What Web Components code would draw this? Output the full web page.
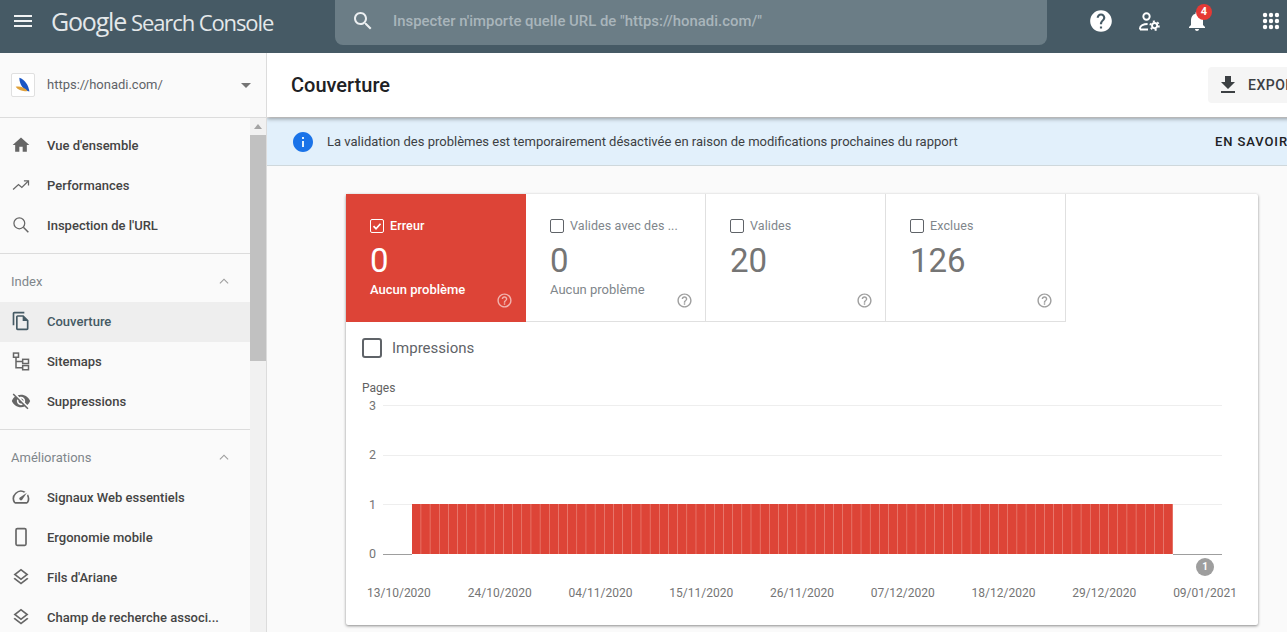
<!DOCTYPE html>
<html lang="fr">
<head>
<meta charset="utf-8">
<title>Couverture</title>
<style>
  html, body { margin: 0; height: 632px; overflow: hidden; background: #fafafa; font-family: Roboto, "Liberation Sans", sans-serif; }
  #app { display: flex; flex-direction: column; height: 632px; }
  #body { display: flex; flex: 1; min-height: 0; }
</style>
</head>
<body>
<div id="app">
  <gsc-header></gsc-header>
  <div id="body">
    <gsc-sidebar>
      <gsc-nav-item icon="home">Vue d'ensemble</gsc-nav-item>
      <gsc-nav-item icon="trending">Performances</gsc-nav-item>
      <gsc-nav-item icon="lens">Inspection de l'URL</gsc-nav-item>
      <gsc-nav-heading>Index</gsc-nav-heading>
      <gsc-nav-item icon="copy" active>Couverture</gsc-nav-item>
      <gsc-nav-item icon="sitemap">Sitemaps</gsc-nav-item>
      <gsc-nav-item icon="eyeoff">Suppressions</gsc-nav-item>
      <gsc-nav-heading>Améliorations</gsc-nav-heading>
      <gsc-nav-item icon="speed">Signaux Web essentiels</gsc-nav-item>
      <gsc-nav-item icon="phone">Ergonomie mobile</gsc-nav-item>
      <gsc-nav-item icon="layers">Fils d'Ariane</gsc-nav-item>
      <gsc-nav-item icon="layers">Champ de recherche associ...</gsc-nav-item>
    </gsc-sidebar>
    <gsc-main>
      <gsc-card>
        <gsc-tile slot="tiles" label="Erreur" value="0" sub="Aucun problème" selected></gsc-tile>
        <gsc-tile slot="tiles" label="Valides avec des ..." value="0" sub="Aucun problème"></gsc-tile>
        <gsc-tile slot="tiles" label="Valides" value="20"></gsc-tile>
        <gsc-tile slot="tiles" label="Exclues" value="126"></gsc-tile>
        <gsc-chart></gsc-chart>
      </gsc-card>
    </gsc-main>
  </div>
</div>

<script>
// material-ish glyphs, all on a 24 box
const ICONS = {
    menu: '<path d="M3 18h18v-2H3v2zm0-5h18v-2H3v2zm0-7v2h18V6H3z"/>',
    search: '<path d="M15.5 14h-.79l-.28-.27C15.41 12.59 16 11.11 16 9.5 16 5.91 13.09 3 9.5 3S3 5.91 3 9.5 5.91 16 9.5 16c1.61 0 3.09-.59 4.23-1.57l.27.28v.79l5 4.99L20.49 19l-4.99-5zm-6 0C7.01 14 5 11.99 5 9.5S7.01 5 9.5 5 14 7.01 14 9.5 11.99 14 9.5 14z"/>',
    lens: '<g fill="none" stroke="currentColor" stroke-width="1.5"><circle cx="10" cy="10" r="6.500"/><path d="M14.800 14.800l6 6" stroke-width="1.800"/></g>',
    help: '<path d="M12 2C6.48 2 2 6.48 2 12s4.48 10 10 10 10-4.48 10-10S17.52 2 12 2zm1 17h-2v-2h2v2zm2.07-7.75l-.9.92C13.45 12.9 13 13.5 13 15h-2v-.5c0-1.1.45-2.1 1.17-2.83l1.24-1.26c.37-.36.59-.86.59-1.41 0-1.1-.9-2-2-2s-2 .9-2 2H8c0-2.21 1.79-4 4-4s4 1.79 4 4c0 .88-.36 1.68-.93 2.25z"/>',
    helpline: '<path d="M11 18h2v-2h-2v2zm1-16C6.48 2 2 6.48 2 12s4.48 10 10 10 10-4.48 10-10S17.52 2 12 2zm0 18c-4.41 0-8-3.59-8-8s3.59-8 8-8 8 3.59 8 8-3.59 8-8 8zm0-14c-2.21 0-4 1.79-4 4h2c0-1.1.9-2 2-2s2 .9 2 2c0 2-3 1.75-3 5h2c0-2.25 3-2.5 3-5 0-2.21-1.79-4-4-4z"/>',
    account: '<g fill="none" stroke="currentColor" stroke-width="1.9"><circle cx="9.500" cy="7.500" r="3.200"/><path d="M3 20.500v-1.200c0-2.600 3.600-4.300 7.600-4.300M3 20.500h8"/><circle cx="17.600" cy="16.600" r="2.600"/><circle cx="17.600" cy="16.600" r="4.300" stroke-width="1.800" stroke-dasharray="2 2.500"/></g>',
    bell: '<path d="M12 22c1.1 0 2-.9 2-2h-4c0 1.1.89 2 2 2zm6-6v-5c0-3.07-1.64-5.64-4.5-6.32V4c0-.83-.67-1.5-1.5-1.5s-1.5.67-1.5 1.5v.68C7.63 5.36 6 7.92 6 11v5l-2 2v1h16v-1l-2-2z"/>',
    apps: '<circle cx="5.500" cy="5.500" r="2.400"/><circle cx="12" cy="5.500" r="2.400"/><circle cx="18.500" cy="5.500" r="2.400"/><circle cx="5.500" cy="12" r="2.400"/><circle cx="12" cy="12" r="2.400"/><circle cx="18.500" cy="12" r="2.400"/><circle cx="5.500" cy="18.500" r="2.400"/><circle cx="12" cy="18.500" r="2.400"/><circle cx="18.500" cy="18.500" r="2.400"/>',
    download: '<path d="M19 9h-4V3H9v6H5l7 7 7-7zM5 18v2h14v-2H5z"/>',
    info: '<path d="M12 2C6.48 2 2 6.48 2 12s4.48 10 10 10 10-4.48 10-10S17.52 2 12 2zm1 15h-2v-6h2v6zm0-8h-2V7h2v2z"/>',
    home: '<path d="M10 20v-6h4v6h5v-8h3L12 3 2 12h3v8z"/>',
    trending: '<g fill="none" stroke="currentColor" stroke-width="1.500"><path d="M2.500 17.500l6.500-6 4 3.500 7.500-7.500"/><path d="M15.500 7h5.500v5.500"/></g>',
    copy: '<path d="M16 1H4c-1.1 0-2 .9-2 2v14h2V3h12V1zm-1 4H8c-1.1 0-1.99.9-1.99 2L6 21c0 1.1.89 2 1.99 2H19c1.1 0 2-.9 2-2V11l-6-6zM8 21V7h6v5h5v9H8z"/>',
    sitemap: '<g fill="none" stroke="currentColor" stroke-width="1.800"><rect x="3" y="2.500" width="6" height="5"/><rect x="14" y="10" width="7" height="5"/><rect x="14" y="17.500" width="7" height="5"/><path d="M6 7.500V20h8M6 12.500h8"/></g>',
    eyeoff: '<path d="M12 7c2.76 0 5 2.24 5 5 0 .65-.13 1.26-.36 1.83l2.92 2.92c1.51-1.26 2.7-2.89 3.43-4.75-1.73-4.39-6-7.5-11-7.5-1.4 0-2.74.25-3.98.7l2.16 2.16C10.74 7.13 11.35 7 12 7zM2 4.27l2.28 2.28.46.46C3.08 8.3 1.78 10.02 1 12c1.73 4.39 6 7.5 11 7.5 1.55 0 3.03-.3 4.38-.84l.42.42L19.73 22 21 20.73 3.27 3 2 4.27zM7.53 9.8l1.55 1.55c-.05.21-.08.43-.08.65 0 1.66 1.34 3 3 3 .22 0 .44-.03.65-.08l1.55 1.55c-.67.33-1.41.53-2.2.53-2.76 0-5-2.24-5-5 0-.79.2-1.53.53-2.2zm4.31-.78l3.15 3.15.02-.16c0-1.66-1.34-3-3-3l-.17.01z"/>',
    speed: '<path d="M20.38 8.57l-1.23 1.85a8 8 0 0 1-.22 7.58H5.07A8 8 0 0 1 15.58 6.85l1.85-1.23A10 10 0 0 0 3.35 19a2 2 0 0 0 1.72 1h13.85a2 2 0 0 0 1.74-1 10 10 0 0 0-.27-10.44zm-9.79 6.84a2 2 0 0 0 2.83 0l5.66-8.49-8.49 5.66a2 2 0 0 0 0 2.83z"/>',
    phone: '<rect x="6" y="2" width="12" height="20" rx="1.600" fill="none" stroke="currentColor" stroke-width="2"/>',
    layers: '<path d="M11.99 18.54l-7.37-5.73L3 14.07l9 7 9-7-1.63-1.27-7.38 5.74zM12 16l7.36-5.73L21 9l-9-7-9 7 1.63 1.27L12 16zm0-11.47L17.74 9 12 13.47 6.26 9 12 4.53z"/>',
    chevron: '<path d="M12 8.500l-6 6 1 1 5-5 5 5 1-1z"/>',
    caret: '<path d="M7 10l5 5 5-5z"/>'
};

class GscIcon extends HTMLElement {
    connectedCallback() {
        const size = this.getAttribute("size") || 24;
        this.attachShadow({ mode: "open" }).innerHTML = `
            <style>
                :host { display: inline-flex; flex: none; width: ${size}px; height: ${size}px; }
                svg { width: 100%; height: 100%; fill: currentColor; display: block; }
            </style>
            <svg viewBox="0 0 24 24">${ICONS[this.getAttribute("name")] || ""}</svg>`;
    }
}
customElements.define("gsc-icon", GscIcon);

class GscHeader extends HTMLElement {
    constructor() {
        super();
        this.attachShadow({ mode: "open" }).innerHTML = `
            <style>
                :host { display: flex; flex: none; height: 53px; background: #465a65; color: #fff; align-items: flex-start; }
                .menu { margin: 9px 16px 0 11px; color: #f1f3f4; }
                .brand { width: 284px; flex: none; height: 45px; font: 400 22px/43px "Open Sans", sans-serif; letter-spacing: -1.1px; color: #e4e8ea; white-space: nowrap; }
                .brand span { font-size: 25px; letter-spacing: -1.2px; margin-right: 5px; }
                .search { width: 712px; height: 45px; flex: none; box-sizing: border-box; background: #6b7d86; border-radius: 0 0 8px 8px; display: flex; align-items: center; padding: 0 0 3px 16px; gap: 18px; color: #eceff1; }
                .search span { font-size: 14.900px; font-weight: 500; color: #a9b5bb; }
                .tools { margin-left: 30px; display: flex; }
                .tool { width: 48px; height: 42px; display: flex; align-items: center; justify-content: center; position: relative; }
                .tool.apps { width: 32px; margin-left: 34px; }
                .badge { position: absolute; left: 23px; top: 4px; width: 16px; height: 16px; border-radius: 50%; background: #e53935; color: #fff; font-size: 11px; font-weight: 700; line-height: 16px; text-align: center; }
            </style>
            <gsc-icon class="menu" name="menu"></gsc-icon>
            <div class="brand"><span>Google</span>Search Console</div>
            <div class="search"><gsc-icon name="search"></gsc-icon><span>Inspecter n'importe quelle URL de "https://honadi.com/"</span></div>
            <div class="tools">
                <div class="tool"><gsc-icon name="help" size="26"></gsc-icon></div>
                <div class="tool"><gsc-icon name="account"></gsc-icon></div>
                <div class="tool"><gsc-icon name="bell"></gsc-icon><span class="badge">4</span></div>
                <div class="tool apps"><gsc-icon name="apps" size="22"></gsc-icon></div>
            </div>`;
    }
}
customElements.define("gsc-header", GscHeader);

class GscSidebar extends HTMLElement {
    constructor() {
        super();
        this.attachShadow({ mode: "open" }).innerHTML = `
            <style>
                :host { display: flex; flex-direction: column; flex: none; width: 267px; box-sizing: border-box; border-right: 1px solid #dcdcdc; background: #fafafa; overflow: hidden; }
                .site { flex: none; height: 64px; border-bottom: 1px solid #dcdcdc; display: flex; align-items: center; padding: 0 8px 0 11px; font-size: 13px; color: #5f6368; }
                .logo { width: 22px; height: 22px; flex: none; border: 1px solid #e0e0e0; border-radius: 2px; background: #fff; margin-right: 12px; }
                .logo svg { display: block; width: 100%; height: 100%; }
                .site span { flex: 1; margin-bottom: 2px; }
                .site gsc-icon { color: #757575; }
                .lower { flex: 1; display: flex; min-height: 0; }
                nav { flex: 1; min-width: 0; padding-top: 7px; }
                .bar { flex: none; width: 16px; background: #f1f1f1; display: flex; flex-direction: column; align-items: center; }
                .arrow { width: 0; height: 0; margin: 6px 0 5px; border: 4px solid transparent; border-top: 0; border-bottom: 5px solid #a3a3a3; }
                .thumb { width: 100%; height: 226px; margin-top: 1px; background: #c1c1c1; }
            </style>
            <div class="site">
                <div class="logo"><svg viewBox="0 0 24 24">
                    <path d="M8 4c6 2 10 8 11 15-6-1-11-7-11-15z" fill="#1a56c4"/>
                    <path d="M4 14c5-1 10 1 13 4.500-5 1-10-.5-13-4.500z" fill="#e0a13a"/>
                </svg></div>
                <span>https://honadi.com/</span>
                <gsc-icon name="caret"></gsc-icon>
            </div>
            <div class="lower">
                <nav><slot></slot></nav>
                <div class="bar"><div class="arrow"></div><div class="thumb"></div></div>
            </div>`;
    }
}
customElements.define("gsc-sidebar", GscSidebar);

class GscNavItem extends HTMLElement {
    connectedCallback() {
        this.attachShadow({ mode: "open" }).innerHTML = `
            <style>
                :host { display: flex; align-items: center; height: 40px; padding-left: 11px; gap: 16px; font-size: 13px; font-weight: 500; color: #444; white-space: nowrap; }
                /* highlight sits 1px lower than the text row */
                :host([active]) { background: linear-gradient(transparent 1px, #eeeeee 1px); box-shadow: 0 1px 0 #eeeeee; color: #455a64; }
                gsc-icon { color: #666; }
                :host([active]) gsc-icon { color: #455a64; }
            </style>
            <gsc-icon name="${this.getAttribute("icon")}" size="20"></gsc-icon><slot></slot>`;
    }
}
customElements.define("gsc-nav-item", GscNavItem);

class GscNavHeading extends HTMLElement {
    constructor() {
        super();
        this.attachShadow({ mode: "open" }).innerHTML = `
            <style>
                :host { display: flex; align-items: center; box-sizing: border-box; height: 48px; margin-top: 8px; padding: 7px 17px 0 11px; border-top: 1px solid #dcdcdc; font-size: 13px; font-weight: 400; color: #80868b; }
                span { flex: 1; }
                gsc-icon { color: #9e9e9e; }
            </style>
            <span><slot></slot></span><gsc-icon name="chevron" size="18"></gsc-icon>`;
    }
}
customElements.define("gsc-nav-heading", GscNavHeading);

class GscMain extends HTMLElement {
    constructor() {
        super();
        this.attachShadow({ mode: "open" }).innerHTML = `
            <style>
                :host { display: block; flex: 1; min-width: 0; overflow: hidden; }
                /* the real page runs past the window on the right */
                .page { width: 1082px; }
                .toolbar { position: relative; z-index: 1; height: 64px; background: #fff; display: flex; align-items: center; padding: 0 24px; box-sizing: border-box; box-shadow: 0 2px 4px rgba(0,0,0,.35); }
                h1 { flex: 1; margin: 0; font-size: 20px; font-weight: 500; color: #202124; }
                .export { width: 117px; height: 36px; box-sizing: border-box; flex: none; display: flex; align-items: center; gap: 8px; padding-left: 8px; background: #f5f5f5; border-radius: 4px; font-size: 14px; font-weight: 500; letter-spacing: .5px; color: #3c4043; }
                .banner { height: 47px; margin-top: 1px; background: #e2f0fb; border-bottom: 1px solid #cfd8dc; display: flex; align-items: center; padding: 0 24px; font-size: 13px; color: #3c4043; gap: 12px; }
                .banner gsc-icon { color: #1a73e8; }
                .banner span { flex: 1; white-space: nowrap; }
                .banner b { font-size: 13px; font-weight: 500; letter-spacing: .9px; color: #202124; width: 110px; flex: none; white-space: nowrap; }
                .content { padding: 28px 0 0 79px; }
            </style>
            <div class="page">
                <div class="toolbar">
                    <h1>Couverture</h1>
                    <div class="export"><gsc-icon name="download"></gsc-icon>EXPORTER</div>
                </div>
                <div class="banner">
                    <gsc-icon name="info"></gsc-icon>
                    <span>La validation des problèmes est temporairement désactivée en raison de modifications prochaines du rapport</span>
                    <b>EN SAVOIR PLUS</b>
                </div>
                <div class="content"><slot></slot></div>
            </div>`;
    }
}
customElements.define("gsc-main", GscMain);

class GscCard extends HTMLElement {
    constructor() {
        super();
        this.attachShadow({ mode: "open" }).innerHTML = `
            <style>
                :host { display: block; width: 912px; height: 431px; background: #fff; border-radius: 2px; box-shadow: 0 1px 3px rgba(0,0,0,.45); }
                .tiles { display: flex; }
            </style>
            <div class="tiles"><slot name="tiles"></slot></div>
            <slot></slot>`;
    }
}
customElements.define("gsc-card", GscCard);

class GscTile extends HTMLElement {
    connectedCallback() {
        const on = this.hasAttribute("selected");
        this.attachShadow({ mode: "open" }).innerHTML = `
            <style>
                :host { display: flex; flex-direction: column; width: 180px; height: 128px; box-sizing: border-box; padding: 25px 12px 0 24px; border-right: 1px solid #e0e0e0; border-bottom: 1px solid #e0e0e0; color: #80868b; font-size: 12.500px; }
                :host([selected]) { background: #dd4437; color: #fff; border-color: #dd4437; font-weight: 500; }
                .head { display: flex; align-items: center; gap: 6px; height: 14px; letter-spacing: .1px; }
                .head span { margin-top: -2px; }
                .box { width: 14px; height: 14px; box-sizing: border-box; border: 1px solid #5f6368; border-radius: 2px; flex: none; }
                :host([selected]) .box { border-color: #fff; }
                .box svg { display: block; width: 100%; height: 100%; fill: none; stroke: #fff; stroke-width: 1.700; }
                .value { font-size: 33px; font-weight: 400; line-height: 40px; margin-top: 8px; color: #757575; }
                :host([selected]) .value { color: #fff; }
                .foot { display: flex; justify-content: space-between; height: 34px; margin-top: 1px; font-size: 13px; line-height: 16px; }
                .foot gsc-icon { margin-top: 10px; margin-left: auto; color: #9e9e9e; }
                :host([selected]) .foot gsc-icon { color: rgba(255,255,255,.6); }
            </style>
            <div class="head">
                <div class="box">${on ? '<svg viewBox="0 0 12 12"><path d="M2.500 6.200l2.500 2.500 4.500-5"/></svg>' : ""}</div>
                <span>${this.getAttribute("label")}</span>
            </div>
            <div class="value">${this.getAttribute("value")}</div>
            <div class="foot"><span>${this.getAttribute("sub") || ""}</span><gsc-icon name="helpline" size="17"></gsc-icon></div>`;
    }
}
customElements.define("gsc-tile", GscTile);

class GscChart extends HTMLElement {
    connectedCallback() {
        // 83 daily bars of the same height, starting 29px into the plot
        let bars = "";
        const step = 761 / 83;
        for (let i = 0; i < 83; i++) {
            bars += `<rect x="${(29 + i * step).toFixed(2)}" y="108" width="${(step - .5).toFixed(2)}" height="50"/>`;
        }
        const dates = ["13/10/2020", "24/10/2020", "04/11/2020", "15/11/2020", "26/11/2020", "07/12/2020", "18/12/2020", "29/12/2020", "09/01/2021"];
        this.attachShadow({ mode: "open" }).innerHTML = `
            <style>
                :host { display: block; color: #757575; font-size: 12px; }
                .toggle { display: flex; align-items: center; gap: 10px; height: 52px; padding-left: 16px; font-size: 15px; color: #5f6368; }
                .toggle i { width: 20px; height: 20px; box-sizing: border-box; border: 2px solid #5f6368; border-radius: 3px; }
                .unit { padding-left: 16px; height: 22px; line-height: 29px; color: #616161; }
                .plot { display: flex; height: 184px; padding-left: 16px; }
                .yaxis { width: 14px; height: 166px; padding-top: 1px; display: flex; flex-direction: column; justify-content: space-between; text-align: right; line-height: 18px; margin-right: 7px; font-size: 12.500px; }
                .area { position: relative; width: 839px; height: 184px; flex: none; }
                svg { display: block; }
                rect { fill: #dd4437; }
                rect.under { fill: #ef9f95; }
                .pin { position: absolute; left: 813px; top: 162px; width: 18px; height: 18px; border-radius: 50%; background: #9e9e9e; color: #fff; font-size: 10px; font-weight: 700; line-height: 18px; text-align: center; }
                .dates { display: flex; justify-content: space-between; width: 870px; margin: 3px 0 0 21px; height: 20px; line-height: 20px; }
            </style>
            <div class="toggle"><i></i>Impressions</div>
            <div class="unit">Pages</div>
            <div class="plot">
                <div class="yaxis"><span>3</span><span>2</span><span>1</span><span>0</span></div>
                <div class="area">
                    <svg width="839" height="184" viewBox="0 0 839 184">
                        <path d="M0 9.500h839M0 59.500h839M0 108.500h839" stroke="#eeeeee"/>
                        <rect class="under" x="29" y="108" width="761" height="50"/>
                        ${bars}
                        <path d="M0 158.500h29M790 158.500h49" stroke="#9e9e9e"/>
                    </svg>
                    <div class="pin">1</div>
                </div>
            </div>
            <div class="dates">${dates.map(d => `<span>${d}</span>`).join("")}</div>`;
    }
}
customElements.define("gsc-chart", GscChart);
</script>
</body>
</html>
